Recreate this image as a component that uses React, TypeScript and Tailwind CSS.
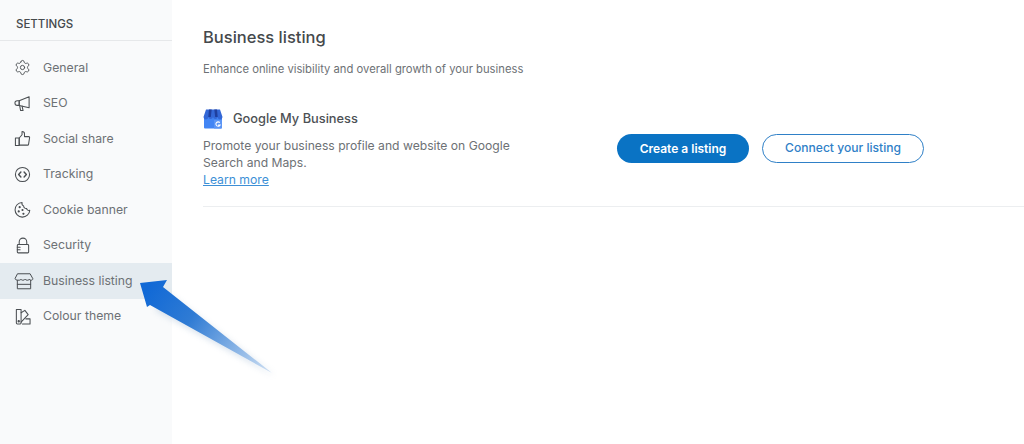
import { Settings } from "lucide-react";
import type { ReactNode } from "react";

const font = { fontFamily: "Inter, 'Open Sans', sans-serif" };

function Icon({ children, size = 17 }: { children: ReactNode; size?: number }) {
  return (
    <svg
      viewBox="0 0 18 18"
      width={size}
      height={size}
      fill="none"
      stroke="currentColor"
      strokeWidth="1.100"
      strokeLinejoin="round"
      strokeLinecap="round"
    >
      {children}
    </svg>
  );
}

const items: { label: string; icon: ReactNode; active?: boolean }[] = [
  { label: "General", icon: <Settings className="size-[17px]" strokeWidth={1.3} /> },
  {
    label: "SEO",
    icon: (
      <Icon>
        <path d="M5.500 6 16 1.800V13.500L5.500 11z" />
        <path d="M5.500 6H3.500a2.500 2.500 0 0 0 0 5h2z" />
        <path d="M6 11.200 7 16.500h2.600L8.600 11.700" />
      </Icon>
    ),
  },
  {
    label: "Social share",
    icon: (
      <Icon>
        <path d="M5.500 8.500 8.500 5V1.500c1.600 0 2.600 1 2.600 2.500v3H15.500a1 1 0 0 1 1 1.200l-1.100 7a1 1 0 0 1-1 .8H5.500z" />
        <path d="M1.500 8.500h4v8h-4z" />
      </Icon>
    ),
  },
  {
    label: "Tracking",
    icon: (
      <Icon>
        <circle cx="9" cy="9" r="7.500" />
        <path d="M7.300 6.400 4.900 9l2.400 2.600M10.700 6.400 13.100 9l-2.400 2.600" strokeWidth="1.500" />
      </Icon>
    ),
  },
  {
    label: "Cookie banner",
    icon: (
      <Icon>
        <path d="M8.500 1.500a7.800 7.800 0 1 0 8.200 8.300c-1.600.5-3.100-.3-3.400-1.900-1.700.2-3.200-1-3.100-2.700-1.300-.3-2-2-1.700-3.700z" />
        <circle cx="6" cy="6.500" r=".6" fill="currentColor" />
        <circle cx="5" cy="11" r=".6" fill="currentColor" />
        <circle cx="9" cy="9.500" r=".6" fill="currentColor" />
        <circle cx="10" cy="13.500" r=".6" fill="currentColor" />
      </Icon>
    ),
  },
  {
    label: "Security",
    icon: (
      <Icon>
        <rect x="3.500" y="8" width="12" height="8.800" rx="1" />
        <path d="M5.500 8V5.200a4 4 0 0 1 8 0V8" />
        <path d="M3.500 10.800h3M3.500 13.500h3" />
      </Icon>
    ),
  },
  {
    label: "Business listing",
    icon: (
      <Icon size={20}>
        <path d="M3.500 2.500h11l2.500 4.500c0 .8-.8 1.300-1.700 1.300-.9 0-1.500-.5-1.600-1-.1.500-.8 1-1.800 1s-1.700-.5-1.900-1c-.2.500-.9 1-1.900 1s-1.700-.5-1.800-1c-.1.500-.7 1-1.600 1C1.800 8.300 1 7.800 1 7z" strokeWidth="0.900" />
        <path d="M3 8.500V16h12V8.500M3 12h12" strokeWidth="0.900" />
      </Icon>
    ),
    active: true,
  },
  {
    label: "Colour theme",
    icon: (
      <Icon>
        <path d="M2.500 1.500h5v14.500a1 1 0 0 1-1 1h-3a1 1 0 0 1-1-1z" />
        <path d="M7.500 5 11.500 2.500l3.500 4.500-7.500 8" />
        <path d="M9 17h8v-5.500h-4.500" />
        <circle cx="5" cy="14" r=".7" fill="currentColor" />
      </Icon>
    ),
  },
];

function GmbLogo() {
  return (
    <svg viewBox="0 0 20 20" className="size-[20px] shrink-0">
      <path d="M1 8h18v10.500a1 1 0 0 1-1 1H2a1 1 0 0 1-1-1z" fill="#4285f4" />
      <path d="M3 .500h14l2.500 7.500a2.400 2.400 0 0 1-4.800 0 2.400 2.400 0 0 1-4.700 0 2.400 2.400 0 0 1-4.700 0 2.400 2.400 0 0 1-4.800 0z" fill="#3367d6" />
      <path d="M6 .500h2.700L7.800 8H5.300zM11.300 .500H14l.700 7.500h-2.500z" fill="#1f3f9e" />
      <path d="M11 11h8v7.500a1 1 0 0 1-1 1h-7z" fill="#5b95f5" />
      <path d="M16.800 13.600a2.200 2.200 0 1 0 .3 2.400h-2" fill="none" stroke="#fff" strokeWidth="1.100" />
    </svg>
  );
}

export default function App() {
  return (
    <div className="relative flex h-[444px] w-[1024px] overflow-hidden bg-white text-[#6d7175]" style={font}>
      <aside className="w-[172px] shrink-0 bg-[#f9fafb]">
        <div className="flex h-[41px] items-center border-b border-[#e6e8ea] pt-[9px] pl-[16px] text-[11.500px] font-medium text-[#45494c]">
          SETTINGS
        </div>
        <ul className="mt-[9px]">
          {items.map((it) => (
            <li
              key={it.label}
              className={`flex h-[35.500px] items-center pl-[14px] text-[12.250px] ${it.active ? "bg-[#e4ebf0]" : ""}`}
            >
              <span className="flex w-[29px] items-center text-[#4a4e52]">{it.icon}</span>
              {it.label}
            </li>
          ))}
        </ul>
      </aside>

      <main className="flex-1 pl-[31px]">
        <h1 className="mt-[27px] text-[16.500px] leading-[20px] font-medium text-[#45494c]">Business listing</h1>
        <p className="mt-[14px] text-[11.250px] leading-[16px]">Enhance online visibility and overall growth of your business</p>

        <div className="mt-[32px] flex items-center border-b border-[#eceef0] pb-[18px]">
          <div className="w-[414px]">
            <div className="flex items-center gap-[10px]">
              <GmbLogo />
              <span className="text-[12.800px] font-medium text-[#4c5054]">Google My Business</span>
            </div>
            <p className="mt-[8px] w-[320px] text-[12.150px] leading-[17px]">
              Promote your business profile and website on Google Search and Maps.
            </p>
            <a className="block text-[12.200px] leading-[17px] text-[#3d8fd6] underline">Learn more</a>
          </div>
          <div className="mb-[1px] flex gap-[13px]">
            <button className="h-[29px] w-[132px] rounded-full bg-[#0a73c4] pt-[1px] text-[12px] font-semibold text-white">
              Create a listing
            </button>
            <button className="h-[29px] w-[162px] rounded-full border border-[#2f80c7] pt-[1px] text-[12.100px] font-medium text-[#2f80c7]">
              Connect your listing
            </button>
          </div>
        </div>
      </main>

      <svg className="pointer-events-none absolute top-[270px] left-[130px] h-[115px] w-[155px]" viewBox="130 270 155 115">
        <defs>
          <linearGradient id="arrowFill" x1="150" y1="285" x2="272" y2="373" gradientUnits="userSpaceOnUse">
            <stop offset="0" stopColor="#1169d6" />
            <stop offset="0.35" stopColor="#2f7bd4" />
            <stop offset="1" stopColor="#cfe0f3" />
          </linearGradient>
          <filter id="arrowShadow" x="-20%" y="-20%" width="140%" height="140%">
            <feGaussianBlur stdDeviation="3" />
          </filter>
        </defs>
        <path d="M163 289 272 373 152 307Z" fill="#8aa9c9" opacity="0.35" filter="url(#arrowShadow)" transform="translate(3 3)" />
        <path d="M140 283 167 280 163 287 272 373 150 305 147 307Z" fill="url(#arrowFill)" />
      </svg>
    </div>
  );
}
